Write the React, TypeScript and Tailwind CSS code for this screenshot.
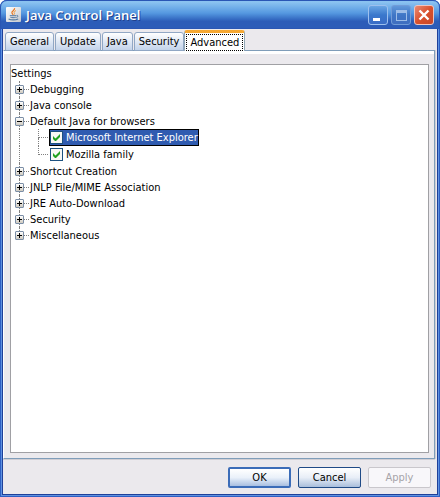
import { useState } from "react";

const FONT = "font-['DejaVu_Sans_Condensed','Open_Sans',sans-serif]";

const tabs = ["General", "Update", "Java", "Security", "Advanced"];

type Node = { label: string; children?: string[] };

const nodes: Node[] = [
  { label: "Debugging" },
  { label: "Java console" },
  {
    label: "Default Java for browsers",
    children: ["Microsoft Internet Explorer", "Mozilla family"],
  },
  { label: "Shortcut Creation" },
  { label: "JNLP File/MIME Association" },
  { label: "JRE Auto-Download" },
  { label: "Security" },
  { label: "Miscellaneous" },
];

function JavaIcon() {
  return (
    <svg viewBox="0 0 15 15" className="h-[15px] w-[15px] shrink-0" aria-hidden="true">
      <defs>
        <linearGradient id="cupBg" x1="0" y1="0" x2="1" y2="1">
          <stop offset="0" stopColor="#ffffff" />
          <stop offset="1" stopColor="#c4c7cc" />
        </linearGradient>
      </defs>
      <rect width="15" height="15" rx="1" fill="url(#cupBg)" />
      <path d="M8.600 1.200c.5 2-3 2.800-2.700 4.500.1.900 1 1.300 1.200 2.100" fill="none" stroke="#e87722" strokeWidth="1.200" />
      <path d="M10 3.600c-1.800.8-2.300 1.500-1.700 2.300.5.800.1 1.400-.4 1.900" fill="none" stroke="#ef9a3c" strokeWidth="1" />
      <path d="M3.800 8.700h6.400M4.400 10.300c1.800.5 3.600.5 5.300 0M10.600 8.400c1.800-.4 1.700 1.700-.2 2" fill="none" stroke="#53789f" strokeWidth="1" />
      <path d="M2.600 12c2.400 1.300 7 1.200 9.600 0" fill="none" stroke="#53789f" strokeWidth="1.200" />
    </svg>
  );
}

function WindowButton({ kind }: { kind: "Minimize" | "Maximize" | "Close" }) {
  const look =
    kind === "Close"
      ? "border-[#f0c4bd] bg-linear-to-br from-[#e98a72] via-[#d9502c] to-[#c8472a]"
      : kind === "Minimize"
        ? "border-[#9dc0ee] bg-linear-to-b from-[#6aa6e4] via-[#3a78cc] to-[#3a6cc6]"
        : "border-[#719cd8] bg-linear-to-b from-[#6299da] via-[#3f76c6] to-[#3f6ec0]";
  return (
    <button
      type="button"
      aria-label={kind}
      disabled={kind === "Maximize"}
      className={`h-5 w-5 rounded-[3px] border ${look}`}
    >
      <svg viewBox="0 0 18 18" className="h-[18px] w-[18px]" aria-hidden="true">
        {kind === "Minimize" && <rect x="4" y="12" width="7" height="3" fill="#fff" />}
        {kind === "Maximize" && (
          <path d="M4 4h11v11H4zM5 7v7h9V7z" fill="#9dbde8" fillRule="evenodd" />
        )}
        {kind === "Close" && (
          <path d="M4.500 4.500l9 9M13.500 4.500l-9 9" stroke="#fff" strokeWidth="2.400" />
        )}
      </svg>
    </button>
  );
}

function Expander({ open, last, label }: { open: boolean; last: boolean; label: string }) {
  return (
    <div className="flex h-4 w-[9px] shrink-0 flex-col items-center">
      <span className="h-1 border-l border-dotted border-[#808080]" />
      <button
        type="button"
        aria-expanded={open}
        aria-label={label}
        className="h-[9px] w-[9px] shrink-0 rounded-[1px] border border-[#7b8ea6] bg-linear-to-b from-white to-[#cfcabf]"
      >
        <svg viewBox="0 0 7 7" className="h-[7px] w-[7px]" aria-hidden="true">
          <path d={open ? "M1 3h5v1H1z" : "M1 3h2V1h1v2h2v1H4v2H3V4H1z"} fill="#000" />
        </svg>
      </button>
      {!last && <span className="h-[3px] border-l border-dotted border-[#808080]" />}
    </div>
  );
}

function Option({ label, selected, last }: { label: string; selected: boolean; last: boolean }) {
  const [on, setOn] = useState(true);
  return (
    <li className="flex h-[17px]">
      <div className="flex w-[9px] shrink-0 justify-center">
        <span className="border-l border-dotted border-[#808080]" />
      </div>
      <div className="ml-[14px] flex w-[11px] shrink-0 flex-col">
        <span className="h-[9px] w-[10px] border-b border-l border-dotted border-[#808080]" />
        {!last && <span className="grow border-l border-dotted border-[#808080]" />}
      </div>
      <label
        className={`flex items-center border ${
          selected ? "border-black bg-[#2f5bb0] text-white" : "border-transparent"
        }`}
      >
        <span className="grid">
          <input
            type="checkbox"
            checked={on}
            onChange={() => setOn(!on)}
            className="col-start-1 row-start-1 h-[13px] w-[13px] appearance-none border border-[#1c5180] bg-[#f8f8f6]"
          />
          {on && (
            <svg
              viewBox="0 0 13 13"
              className="pointer-events-none col-start-1 row-start-1 h-[13px] w-[13px]"
              aria-hidden="true"
            >
              <path d="M3 5v3l2 2h1l4-4V3L5.500 7.500z" fill="#21a121" />
            </svg>
          )}
        </span>
        <span className="ml-[3px] whitespace-nowrap">{label}</span>
      </label>
    </li>
  );
}

function DialogButton({ label, look }: { label: string; look: string }) {
  return (
    <button type="button" disabled={label === "Apply"} className={`h-[21px] w-[63px] rounded-[2px] ${look}`}>
      {label}
    </button>
  );
}

export default function App() {
  return (
    <div className="bg-white">
      <main
        className={`flex h-screen flex-col overflow-hidden rounded-t-[7px] bg-[#ebe9ed] px-[3px] pb-[3px] text-[11px] leading-4 text-black shadow-[inset_0_0_0_1px_#2d5fc4,inset_0_0_0_2px_#5f92e0,inset_0_0_0_3px_#1f4099] ${FONT}`}
      >
        <header className="-mx-[3px] flex h-[29px] shrink-0 items-center rounded-t-[7px] border-x border-t border-b border-[#2a56b4] bg-linear-to-b from-[#8ac2f0] from-5% via-[#5598e0] via-45% to-[#2c5cb8] to-75% pr-[5px] pl-[5px]">
          <JavaIcon />
          <h1 className="ml-[5px] grow pt-px font-['Open_Sans',sans-serif] text-[13px] leading-4 font-semibold text-white [text-shadow:1px_1px_#1f3f8c]">
            Java Control Panel
          </h1>
          <div className="flex gap-[3px]">
            <WindowButton kind="Minimize" />
            <WindowButton kind="Maximize" />
            <WindowButton kind="Close" />
          </div>
        </header>

        <div role="tablist" className="z-10 -mb-px flex shrink-0 items-end gap-px pt-px pl-[2px]">
          {tabs.map((t) =>
            t === "Advanced" ? (
              <button
                key={t}
                type="button"
                role="tab"
                aria-selected="true"
                className="-ml-px h-[21px] rounded-t-[3px] border-x border-t-[3px] border-x-[#91a7b4] border-t-[#f5a833] bg-white px-px"
              >
                <span className="block h-[17px] border border-dotted border-black px-[3px] leading-[15px]">{t}</span>
              </button>
            ) : (
              <button
                key={t}
                type="button"
                role="tab"
                aria-selected="false"
                className="h-[19px] rounded-t-[3px] border border-[#91a7c4] bg-linear-to-b from-white to-[#c3d3ea] px-1 pt-px"
              >
                {t}
              </button>
            ),
          )}
        </div>

        <section className="mr-[2px] flex min-h-0 grow flex-col border border-[#7f9db9] border-l-white pt-[3px] shadow-[inset_0_3px_#fff,0_1px_#d0ced4,1px_0_#d0ced4]">
          <div className="mr-[5px] mb-[5px] ml-[6px] mt-[10px] grow border border-[#a0a0a4] bg-white">
            <p className="h-4 leading-[18px]">Settings</p>
            <ul className="pl-1">
              {nodes.map((n, i) => (
                <li key={n.label}>
                  <div className="flex h-4">
                    <Expander open={!!n.children} last={i === nodes.length - 1} label={n.label} />
                    <span className="mt-2 mr-px h-px w-[5px] border-t border-dotted border-[#808080]" />
                    <span className="leading-[18px]">{n.label}</span>
                  </div>
                  {n.children && (
                    <ul>
                      {n.children.map((c, j) => (
                        <Option key={c} label={c} selected={j === 0} last={j === n.children!.length - 1} />
                      ))}
                    </ul>
                  )}
                </li>
              ))}
            </ul>
          </div>
        </section>

        <footer className="flex shrink-0 justify-end gap-[7px] pt-2 pr-[6px] pb-[6px]">
          <DialogButton
            label="OK"
            look="border-2 border-[#3b6cb8] bg-linear-to-b from-white via-[#eaf1fa] to-[#a9bfe0]"
          />
          <DialogButton
            label="Cancel"
            look="border border-[#1f4a86] bg-linear-to-b from-white via-[#e8eef7] to-[#a9bedb]"
          />
          <DialogButton label="Apply" look="border border-[#c9c7cc] bg-[#f8f7fa] text-[#a6a3a8]" />
        </footer>
      </main>
    </div>
  );
}
